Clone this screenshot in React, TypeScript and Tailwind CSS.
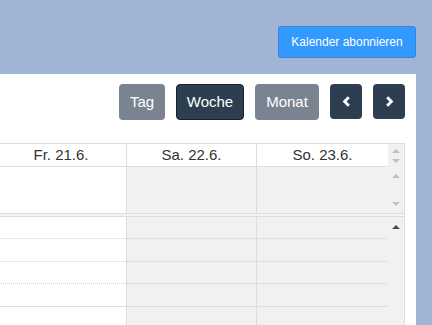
import React from "react";

function Chevron({ dir }: { dir: "left" | "right" }) {
  return (
    <svg width="9" height="11" viewBox="0 0 9 11" className="block">
      <polyline
        points={dir === "left" ? "6.8,1.3 2.6,5.5 6.8,9.7" : "2.2,1.3 6.4,5.5 2.2,9.7"}
        fill="none"
        stroke="currentColor"
        strokeWidth="2.8"
      />
    </svg>
  );
}

function Arrow({ up, dark }: { up: boolean; dark?: boolean }) {
  return (
    <svg width="8" height="4" viewBox="0 0 8 4" className="block">
      <polygon
        points={up ? "0,4 8,4 4,0" : "0,0 8,0 4,4"}
        fill={dark ? "#4a4a4a" : "#c1c1c1"}
      />
    </svg>
  );
}

const days = ["Fr. 21.6.", "Sa. 22.6.", "So. 23.6."];
const rows = [
  { h: "h-[22px]", solid: false },
  { h: "h-[23px]", solid: false },
  { h: "h-[22px]", solid: false },
  { h: "h-[23px]", solid: true },
  { h: "h-[22px]", solid: false },
];

export default function App() {
  return (
    <div className="h-[325px] overflow-hidden bg-[#a1b4d4] flex flex-col font-['Liberation_Sans',Arial,sans-serif] text-[#333]">
      <div className="h-[74px] shrink-0 flex justify-end items-start pt-[26px] pr-4">
        <button className="h-[32px] w-[138px] rounded-[3px] border border-[#2c86e2] bg-[#3399ff] text-[12px] text-white">
          Kalender abonnieren
        </button>
      </div>

      <div className="flex-1 bg-white mr-4 flex flex-col pr-[11px] overflow-hidden">
        <div className="flex justify-end gap-[11px] pt-[10px] text-[15px] text-white">
          <button className="h-[36px] w-[46px] rounded-[4px] bg-[#7a8490] flex items-center justify-center">
            Tag
          </button>
          <button className="h-[36px] w-[68px] rounded-[4px] bg-[#2c3e50] border border-[#18222c] flex items-center justify-center">
            Woche
          </button>
          <button className="h-[36px] w-[64px] rounded-[4px] bg-[#7a8490] flex items-center justify-center">
            Monat
          </button>
          <button className="h-[35px] w-[32px] rounded-[4px] bg-[#2c3e50] flex items-center justify-center">
            <Chevron dir="left" />
          </button>
          <button className="h-[35px] w-[32px] rounded-[4px] bg-[#2c3e50] flex items-center justify-center">
            <Chevron dir="right" />
          </button>
        </div>

        <div className="mt-[23px] ml-[-4px] border-t border-r border-[#ddd] flex flex-col flex-1">
          {/* header */}
          <div className="flex text-[15px] leading-[22px]">
            {days.map((d, i) => (
              <div
                key={d}
                className={`h-[23px] border-b border-[#ddd] text-center ${
                  i === 0 ? "w-[130px]" : i === 1 ? "w-[130px] border-l" : "w-[132px] border-l"
                }`}
              >
                {d}
              </div>
            ))}
            <div className="w-[16px] h-[23px] bg-[#f1f1f1] flex flex-col items-center pt-[5px] gap-[6px]">
              <Arrow up />
              <Arrow up={false} />
            </div>
          </div>

          {/* all-day */}
          <div className="flex h-[46px]">
            <div className="w-[130px] bg-white" />
            <div className="w-[130px] border-l border-[#ddd] bg-[#f1f1f1]" />
            <div className="w-[132px] border-l border-[#ddd] bg-[#f1f1f1]" />
            <div className="w-[16px] bg-[#f1f1f1] flex flex-col items-center justify-between py-[7px]">
              <Arrow up />
              <Arrow up={false} />
            </div>
          </div>

          <div className="h-[4px] border-y border-[#ddd] bg-[#f4f4f4]" />

          {/* time grid */}
          <div className="flex flex-1">
            <div className="flex flex-col">
              {rows.map((r, i) => (
                <div key={i} className={`flex ${r.h}`}>
                  <div
                    className={`w-[130px] bg-white border-b ${
                      r.solid ? "border-[#ddd]" : "border-[#cfcfcf] [border-bottom-style:dotted]"
                    }`}
                  />
                  <div
                    className={`w-[130px] bg-[#f1f1f1] border-l border-l-[#ddd] border-b ${
                      r.solid ? "border-b-[#ddd]" : "border-b-[#cfcfcf] [border-bottom-style:dotted]"
                    }`}
                  />
                  <div
                    className={`w-[132px] bg-[#f1f1f1] border-l border-l-[#ddd] border-b ${
                      r.solid ? "border-b-[#ddd]" : "border-b-[#cfcfcf] [border-bottom-style:dotted]"
                    }`}
                  />
                </div>
              ))}
            </div>
            <div className="w-[16px] bg-[#f1f1f1] flex flex-col items-center pt-[8px]">
              <Arrow up dark />
            </div>
          </div>
        </div>
      </div>
    </div>
  );
}
